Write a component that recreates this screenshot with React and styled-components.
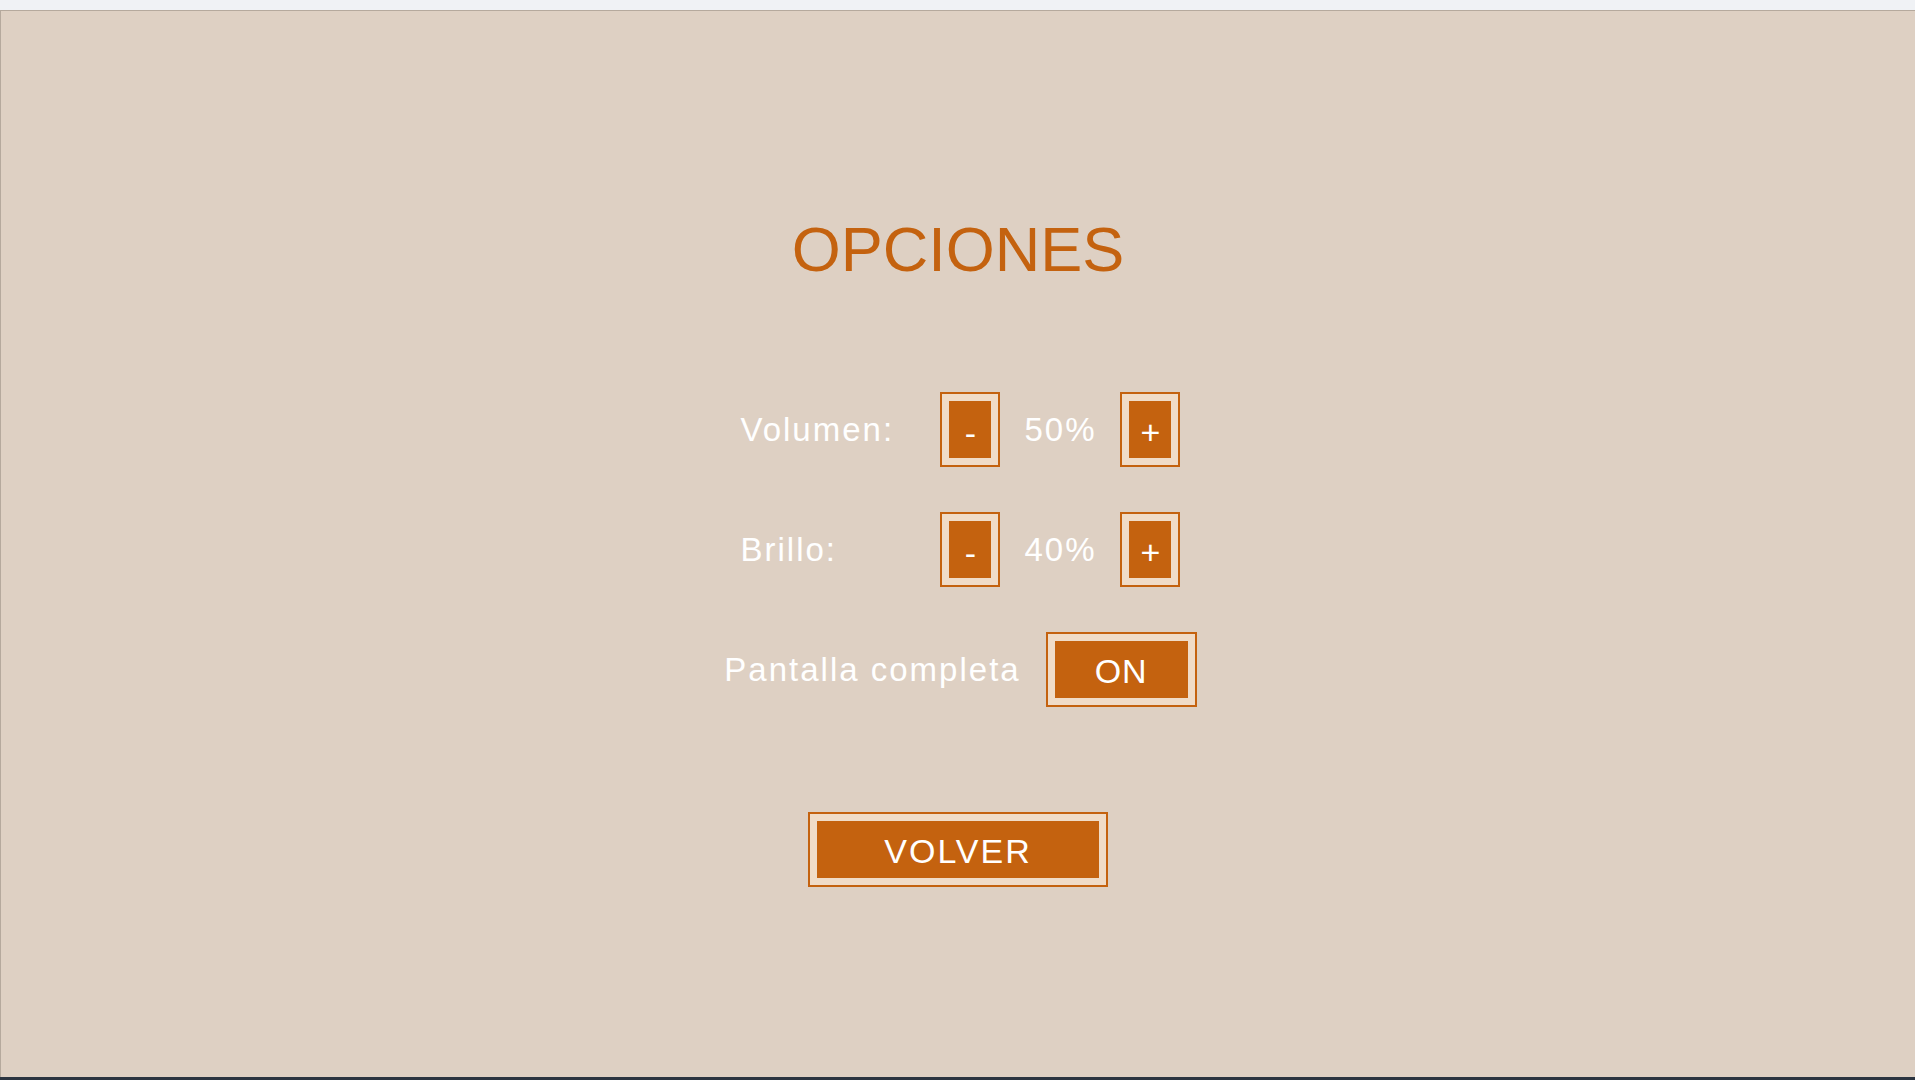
import React, { useState } from "react";
import styled, { createGlobalStyle } from "styled-components";

const GlobalStyle = createGlobalStyle`
  html, body {
    margin: 0;
    padding: 0;
    background: #f0f2f5;
  }
  body {
    font-family: "Liberation Sans", Arial, sans-serif;
  }
`;

const Page = styled.div`
  width: 100%;
  height: 1080px;
  display: flex;
  flex-direction: column;
  overflow: hidden;
`;

const TopStrip = styled.div`
  height: 10px;
  background: #f0f2f5;
`;

const Screen = styled.main`
  flex: 1;
  background: #ded0c3;
  border-top: 1px solid #b5a99d;
  border-left: 1px solid #b5a99d;
  display: flex;
  flex-direction: column;
  align-items: center;
  padding-top: 207px;
`;

const BottomBar = styled.div`
  height: 3px;
  background: #2b3440;
`;

const Title = styled.h1`
  margin: 0 0 111px;
  font-size: 63px;
  line-height: 1;
  font-weight: 400;
  color: #c4620f;
`;

const Settings = styled.div`
  display: flex;
  flex-direction: column;
  align-items: center;
  gap: 45px;
  padding-left: 5px;
`;

const Row = styled.div`
  display: flex;
  align-items: center;
  gap: ${(p) => p.$gap || 0}px;
`;

const Label = styled.span`
  width: ${(p) => (p.$width ? `${p.$width}px` : "auto")};
  font-size: 33px;
  line-height: 1;
  letter-spacing: 2px;
  color: #ffffff;
  white-space: nowrap;
`;

const Value = styled.span`
  width: 120px;
  text-align: center;
  font-size: 33px;
  line-height: 1;
  letter-spacing: 2px;
  color: #ffffff;
`;

const Frame = styled.button`
  width: ${(p) => p.$width}px;
  height: 75px;
  box-sizing: border-box;
  border: 2px solid #c4620f;
  padding: 7px;
  background: #f0dcc8;
  cursor: pointer;
  display: block;
`;

const Face = styled.span`
  display: block;
  height: 100%;
  box-sizing: border-box;
  background: #c4620f;
  color: #ffffff;
  font-family: "Liberation Sans", Arial, sans-serif;
  font-size: 34px;
  line-height: 48px;
  padding-top: ${(p) => p.$offset ?? 8}px;
  letter-spacing: ${(p) => p.$spacing || 0}px;
  text-align: center;
`;

const Back = styled.div`
  margin-top: 105px;
`;

const Stepper = ({ label, value, onChange }) => (
  <Row>
    <Label $width={200}>{label}</Label>
    <Frame $width={60} onClick={() => onChange(Math.max(0, value - 10))}>
      <Face>-</Face>
    </Frame>
    <Value>{value}%</Value>
    <Frame $width={60} onClick={() => onChange(Math.min(100, value + 10))}>
      <Face $offset={7}>+</Face>
    </Frame>
  </Row>
);

export default function App() {
  const [volume, setVolume] = useState(50);
  const [brightness, setBrightness] = useState(40);
  const [fullscreen, setFullscreen] = useState(true);

  return (
    <Page>
      <GlobalStyle />
      <TopStrip />
      <Screen>
        <Title>OPCIONES</Title>
        <Settings>
          <Stepper label="Volumen:" value={volume} onChange={setVolume} />
          <Stepper label="Brillo:" value={brightness} onChange={setBrightness} />
          <Row $gap={25}>
            <Label>Pantalla completa</Label>
            <Frame $width={151} onClick={() => setFullscreen(!fullscreen)}>
              <Face $offset={6} $spacing={1}>{fullscreen ? "ON" : "OFF"}</Face>
            </Frame>
          </Row>
        </Settings>
        <Back>
          <Frame $width={300}>
            <Face $offset={6} $spacing={2}>VOLVER</Face>
          </Frame>
        </Back>
      </Screen>
      <BottomBar />
    </Page>
  );
}
